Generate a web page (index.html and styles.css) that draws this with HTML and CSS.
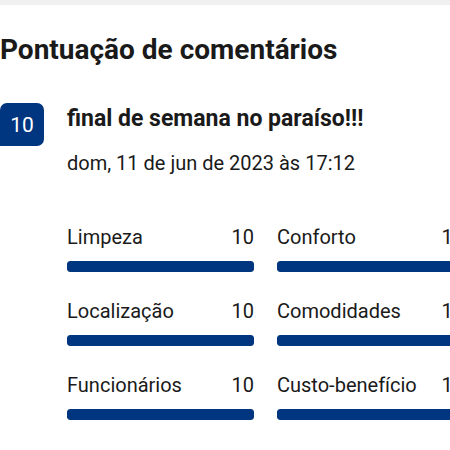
FILE: index.html
```html
<!DOCTYPE html>
<html lang="pt-BR">
<head>
    <meta charset="UTF-8">
    <meta name="viewport" content="width=device-width, initial-scale=1.0">
    <title>Pontuação de comentários</title>
    <link rel="stylesheet" href="styles.css">
</head>
<body>
    <div class="top-bar"></div>
    <div class="page">
        <h2 class="section-title">Pontuação de comentários</h2>

        <div class="review">
            <div class="score-badge">10</div>
            <div class="review-body">
                <h3 class="review-title">final de semana no paraíso!!!</h3>
                <p class="review-date">dom, 11 de jun de 2023 às 17:12</p>

                <!-- Category scores -->
                <div class="scores">
                    <div class="score-item">
                        <div class="score-row"><span>Limpeza</span><span>10</span></div>
                        <div class="bar"><div class="bar-fill" style="width: 100%"></div></div>
                    </div>
                    <div class="score-item">
                        <div class="score-row"><span>Conforto</span><span>10</span></div>
                        <div class="bar"><div class="bar-fill" style="width: 100%"></div></div>
                    </div>
                    <div class="score-item">
                        <div class="score-row"><span>Localização</span><span>10</span></div>
                        <div class="bar"><div class="bar-fill" style="width: 100%"></div></div>
                    </div>
                    <div class="score-item">
                        <div class="score-row"><span>Comodidades</span><span>10</span></div>
                        <div class="bar"><div class="bar-fill" style="width: 100%"></div></div>
                    </div>
                    <div class="score-item">
                        <div class="score-row"><span>Funcionários</span><span>10</span></div>
                        <div class="bar"><div class="bar-fill" style="width: 100%"></div></div>
                    </div>
                    <div class="score-item">
                        <div class="score-row"><span>Custo-benefício</span><span>10</span></div>
                        <div class="bar"><div class="bar-fill" style="width: 100%"></div></div>
                    </div>
                </div>
            </div>
        </div>
    </div>
</body>
</html>
```

FILE: styles.css
```css
body {
    font-family: Roboto, "Noto Sans", Arial, sans-serif;
    background-color: #fff;
    color: #1a1a1a;
    margin: 0;
    padding: 0;
    width: 450px;
    height: 450px;
    overflow: hidden;
}

.top-bar {
    height: 5px;
    background-color: #f0f0f0;
}

.page {
    width: 480px;
}

.section-title {
    font-size: 28px;
    font-weight: 700;
    margin: 29px 0 0 0;
    line-height: 32px;
}

.review {
    display: flex;
    gap: 23px;
    margin-top: 37px;
}

.score-badge {
    flex: 0 0 44px;
    height: 43px;
    background-color: #003580;
    color: #fff;
    border-radius: 7px 7px 7px 0;
    font-size: 21px;
    display: flex;
    align-items: center;
    justify-content: center;
}

.review-title {
    font-size: 23px;
    font-weight: 700;
    margin: 2px 0 0 0;
    line-height: 28px;
}

.review-date {
    font-size: 20px;
    margin: 18px 0 0 0;
    line-height: 24px;
}

.scores {
    display: grid;
    grid-template-columns: 187px 187px;
    column-gap: 23px;
    row-gap: 27px;
    margin-top: 50px;
}

.score-row {
    display: flex;
    justify-content: space-between;
    font-size: 20px;
    line-height: 24px;
}

.bar {
    margin-top: 12px;
    height: 11px;
    background-color: #e6e6e6;
    border-radius: 3px;
    overflow: hidden;
}

.bar-fill {
    height: 100%;
    background-color: #003580;
    border-radius: 3px;
}
```
